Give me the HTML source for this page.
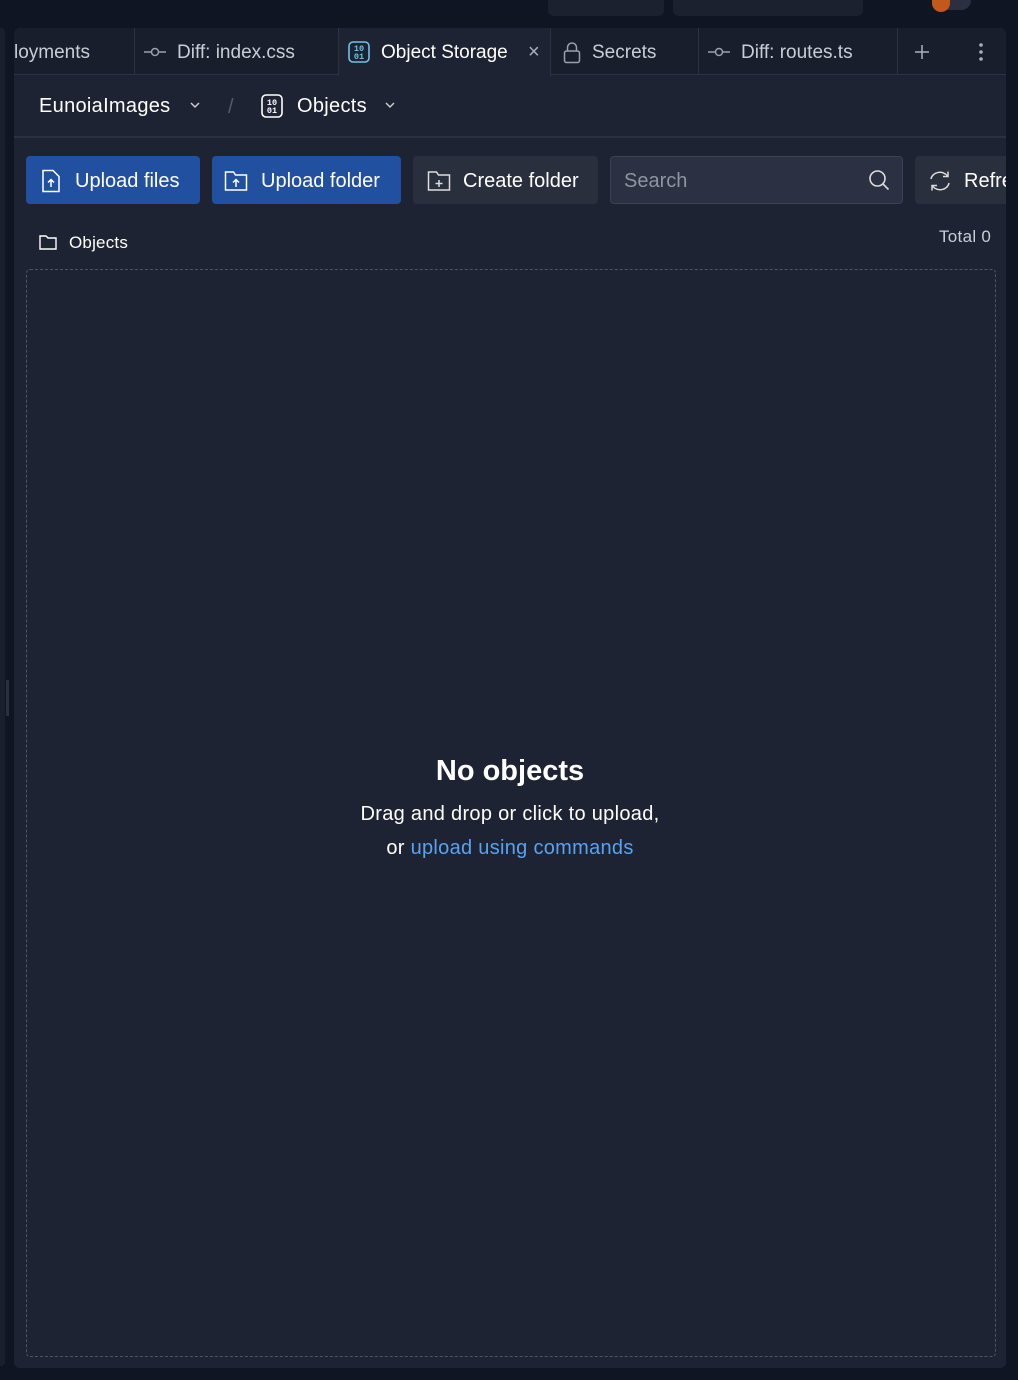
<!DOCTYPE html>
<html><head><style>
*{box-sizing:border-box;margin:0;padding:0}
body{width:1018px;height:1380px;background:#0f1523;font-family:"Liberation Sans",sans-serif;color:#f0f1f4;position:relative;overflow:hidden}
.a{position:absolute}
.t{font-size:19px;color:#c9cdd6;white-space:nowrap}
.btn{position:absolute;top:156px;height:48px;border-radius:4px;display:flex;align-items:center;font-size:20px;color:#fff;white-space:nowrap;padding-top:2px}
svg{display:block}
</style></head><body>
<div class="a" style="left:548px;top:0;width:116px;height:16px;background:#1c2130;border-radius:0 0 6px 6px"></div>
<div class="a" style="left:673px;top:0;width:190px;height:16px;background:#1c2130;border-radius:0 0 6px 6px"></div>
<div class="a" style="left:933px;top:0;width:38px;height:10px;background:#2a3040;border-radius:0 0 14px 14px"></div>
<div class="a" style="left:932px;top:0;width:18px;height:12px;background:#c2581b;border-radius:0 0 9px 9px"></div>
<div class="a" style="left:0;top:28px;width:5px;height:1338px;background:#1a1f2d;border-radius:0 4px 4px 0"></div>
<div class="a" style="left:6px;top:680px;width:3px;height:36px;background:#2a3040"></div>
<div class="a" style="left:14px;top:28px;width:992px;height:1340px;background:#1e2333;border-radius:6px;overflow:hidden">
  <div class="a" style="left:0;top:0;width:992px;height:47px;background:#191e2c;border-bottom:1px solid #2c3242"></div>
  <div class="a" style="left:120px;top:0;width:1px;height:47px;background:#2c3242"></div>
  <div class="a" style="left:324px;top:0;width:213px;height:48px;background:#1e2333;border-left:1px solid #2c3242;border-right:1px solid #2c3242"></div>
  <div class="a" style="left:684px;top:0;width:1px;height:47px;background:#2c3242"></div>
  <div class="a" style="left:883px;top:0;width:1px;height:47px;background:#2c3242"></div>
  <div class="a" style="left:0;top:108px;width:992px;height:2px;background:#2a3040"></div>
</div>
<div class="a t" style="left:14px;top:42px">loyments</div>
<svg class="a" style="left:143px;top:45px" width="24" height="14" viewBox="0 0 24 14"><path d="M1 7h7M16 7h7" stroke="#9aa0ad" stroke-width="1.5"/><circle cx="12" cy="7" r="3.5" fill="none" stroke="#9aa0ad" stroke-width="1.5"/></svg>
<div class="a t" style="left:177px;top:42px">Diff: index.css</div>
<svg class="a" style="left:348px;top:41px" width="22" height="22" viewBox="0 0 22 22"><rect x="1" y="1" width="20" height="20" rx="4" fill="none" stroke="#6ec3e6" stroke-width="1.6"/><text x="11" y="10" font-size="8.5" font-weight="bold" fill="#6ec3e6" text-anchor="middle" font-family="Liberation Mono">10</text><text x="11" y="18" font-size="8.5" font-weight="bold" fill="#6ec3e6" text-anchor="middle" font-family="Liberation Mono">01</text></svg>
<div class="a t" style="left:381px;top:42px;color:#fff">Object Storage</div>
<div class="a t" style="left:528px;top:41px;color:#aab0bb;font-size:20px">×</div>
<svg class="a" style="left:563px;top:41px" width="18" height="23" viewBox="0 0 18 23"><rect x="1.5" y="10" width="15" height="11.5" rx="2" fill="none" stroke="#9aa0ad" stroke-width="1.5"/><path d="M4.5 10V6.5a4.5 4.5 0 0 1 9 0V10" fill="none" stroke="#9aa0ad" stroke-width="1.5"/></svg>
<div class="a t" style="left:592px;top:42px">Secrets</div>
<svg class="a" style="left:707px;top:45px" width="24" height="14" viewBox="0 0 24 14"><path d="M1 7h7M16 7h7" stroke="#9aa0ad" stroke-width="1.5"/><circle cx="12" cy="7" r="3.5" fill="none" stroke="#9aa0ad" stroke-width="1.5"/></svg>
<div class="a t" style="left:741px;top:42px">Diff: routes.ts</div>
<svg class="a" style="left:914px;top:44px" width="16" height="16" viewBox="0 0 16 16"><path d="M8 1v14M1 8h14" stroke="#aab0bb" stroke-width="1.5"/></svg>
<svg class="a" style="left:978px;top:42px" width="6" height="20" viewBox="0 0 6 20"><circle cx="3" cy="3" r="1.8" fill="#aab0bb"/><circle cx="3" cy="10" r="1.8" fill="#aab0bb"/><circle cx="3" cy="17" r="1.8" fill="#aab0bb"/></svg>
<div class="a" style="left:39px;top:95px;font-size:20px;color:#fff;letter-spacing:0.3px">EunoiaImages</div>
<svg class="a" style="left:189px;top:101px" width="12" height="8" viewBox="0 0 12 8"><path d="M2 2l4 4 4-4" fill="none" stroke="#ccc" stroke-width="1.5"/></svg>
<div class="a" style="left:228px;top:96px;font-size:20px;color:#555c6b">/</div>
<svg class="a" style="left:261px;top:94px" width="22" height="24" viewBox="0 0 22 24"><rect x="1" y="1" width="20" height="22" rx="4" fill="none" stroke="#fff" stroke-width="1.6"/><text x="11" y="11" font-size="8.5" font-weight="bold" fill="#fff" text-anchor="middle" font-family="Liberation Mono">10</text><text x="11" y="19" font-size="8.5" font-weight="bold" fill="#fff" text-anchor="middle" font-family="Liberation Mono">01</text></svg>
<div class="a" style="left:297px;top:95px;font-size:20px;color:#fff;letter-spacing:0.3px">Objects</div>
<svg class="a" style="left:384px;top:101px" width="12" height="8" viewBox="0 0 12 8"><path d="M2 2l4 4 4-4" fill="none" stroke="#ccc" stroke-width="1.5"/></svg>
<div class="btn" style="left:26px;width:174px;background:#2150a0;padding-left:14px"><svg width="22" height="24" viewBox="0 0 22 24" style="margin-right:13px"><path d="M3 1.5h10l6 6v15H3z" fill="none" stroke="#fff" stroke-width="1.5"/><path d="M11 18v-7M8 13.5l3-3 3 3" fill="none" stroke="#fff" stroke-width="1.5"/></svg>Upload files</div>
<div class="btn" style="left:212px;width:189px;background:#2150a0;padding-left:12px"><svg width="24" height="22" viewBox="0 0 24 22" style="margin-right:13px"><path d="M1.5 2h8l2 3h11v15h-21z" fill="none" stroke="#fff" stroke-width="1.5"/><path d="M12 17v-7M9 12.5l3-3 3 3" fill="none" stroke="#fff" stroke-width="1.5"/></svg>Upload folder</div>
<div class="btn" style="left:413px;width:185px;background:#2a2f3e;padding-left:14px"><svg width="24" height="22" viewBox="0 0 24 22" style="margin-right:12px"><path d="M1.5 2h8l2 3h11v15h-21z" fill="none" stroke="#ddd" stroke-width="1.5"/><path d="M12 10v7M8.5 13.5h7" stroke="#ddd" stroke-width="1.5"/></svg>Create folder</div>
<div class="btn" style="left:610px;width:293px;background:#2b3042;border:1px solid #3c4252;padding-left:13px;color:#8e94a0">Search<svg class="a" style="left:257px;top:12px" width="22" height="22" viewBox="0 0 22 22"><circle cx="9.5" cy="9.5" r="7.5" fill="none" stroke="#ddd" stroke-width="1.6"/><path d="M15 15l5.5 5.5" stroke="#ddd" stroke-width="1.6"/></svg></div>
<div class="btn" style="left:915px;width:91px;background:#2a2f3e;padding-left:13px;overflow:hidden;border-radius:4px 0 0 4px"><svg width="24" height="22" viewBox="0 0 24 22" style="margin-right:12px;flex:none"><path d="M3 9a9 8 0 0 1 16.5-3M21 13a9 8 0 0 1-16.5 3" fill="none" stroke="#ddd" stroke-width="1.5"/><path d="M20 1.5v5h-5M4 20.5v-5h5" fill="none" stroke="#ddd" stroke-width="1.5"/></svg>Refresh</div>
<svg class="a" style="left:39px;top:235px" width="18" height="15" viewBox="0 0 18 15"><path d="M1 1h6l2 2h8v11H1z" fill="none" stroke="#fff" stroke-width="1.4"/></svg>
<div class="a" style="left:69px;top:233px;font-size:17px;color:#fff;letter-spacing:0.2px">Objects</div>
<div class="a" style="left:939px;top:227px;font-size:17px;color:#c9cdd6;letter-spacing:0.3px">Total 0</div>
<div class="a" style="left:26px;top:269px;width:970px;height:1088px;border:1px dashed #4e5463;border-radius:4px"></div>
<div class="a" style="left:0;top:755px;width:1018px;text-align:center;font-size:29px;font-weight:bold;color:#fff;padding-left:2px">No objects</div>
<div class="a" style="left:0;top:803px;width:1018px;text-align:center;font-size:20px;color:#fff;padding-left:2px;letter-spacing:0.3px">Drag and drop or click to upload,</div>
<div class="a" style="left:0;top:837px;width:1018px;text-align:center;font-size:20px;color:#fff;padding-left:2px;letter-spacing:0.3px">or <span style="color:#5aa2f0">upload using commands</span></div>
</body></html>
